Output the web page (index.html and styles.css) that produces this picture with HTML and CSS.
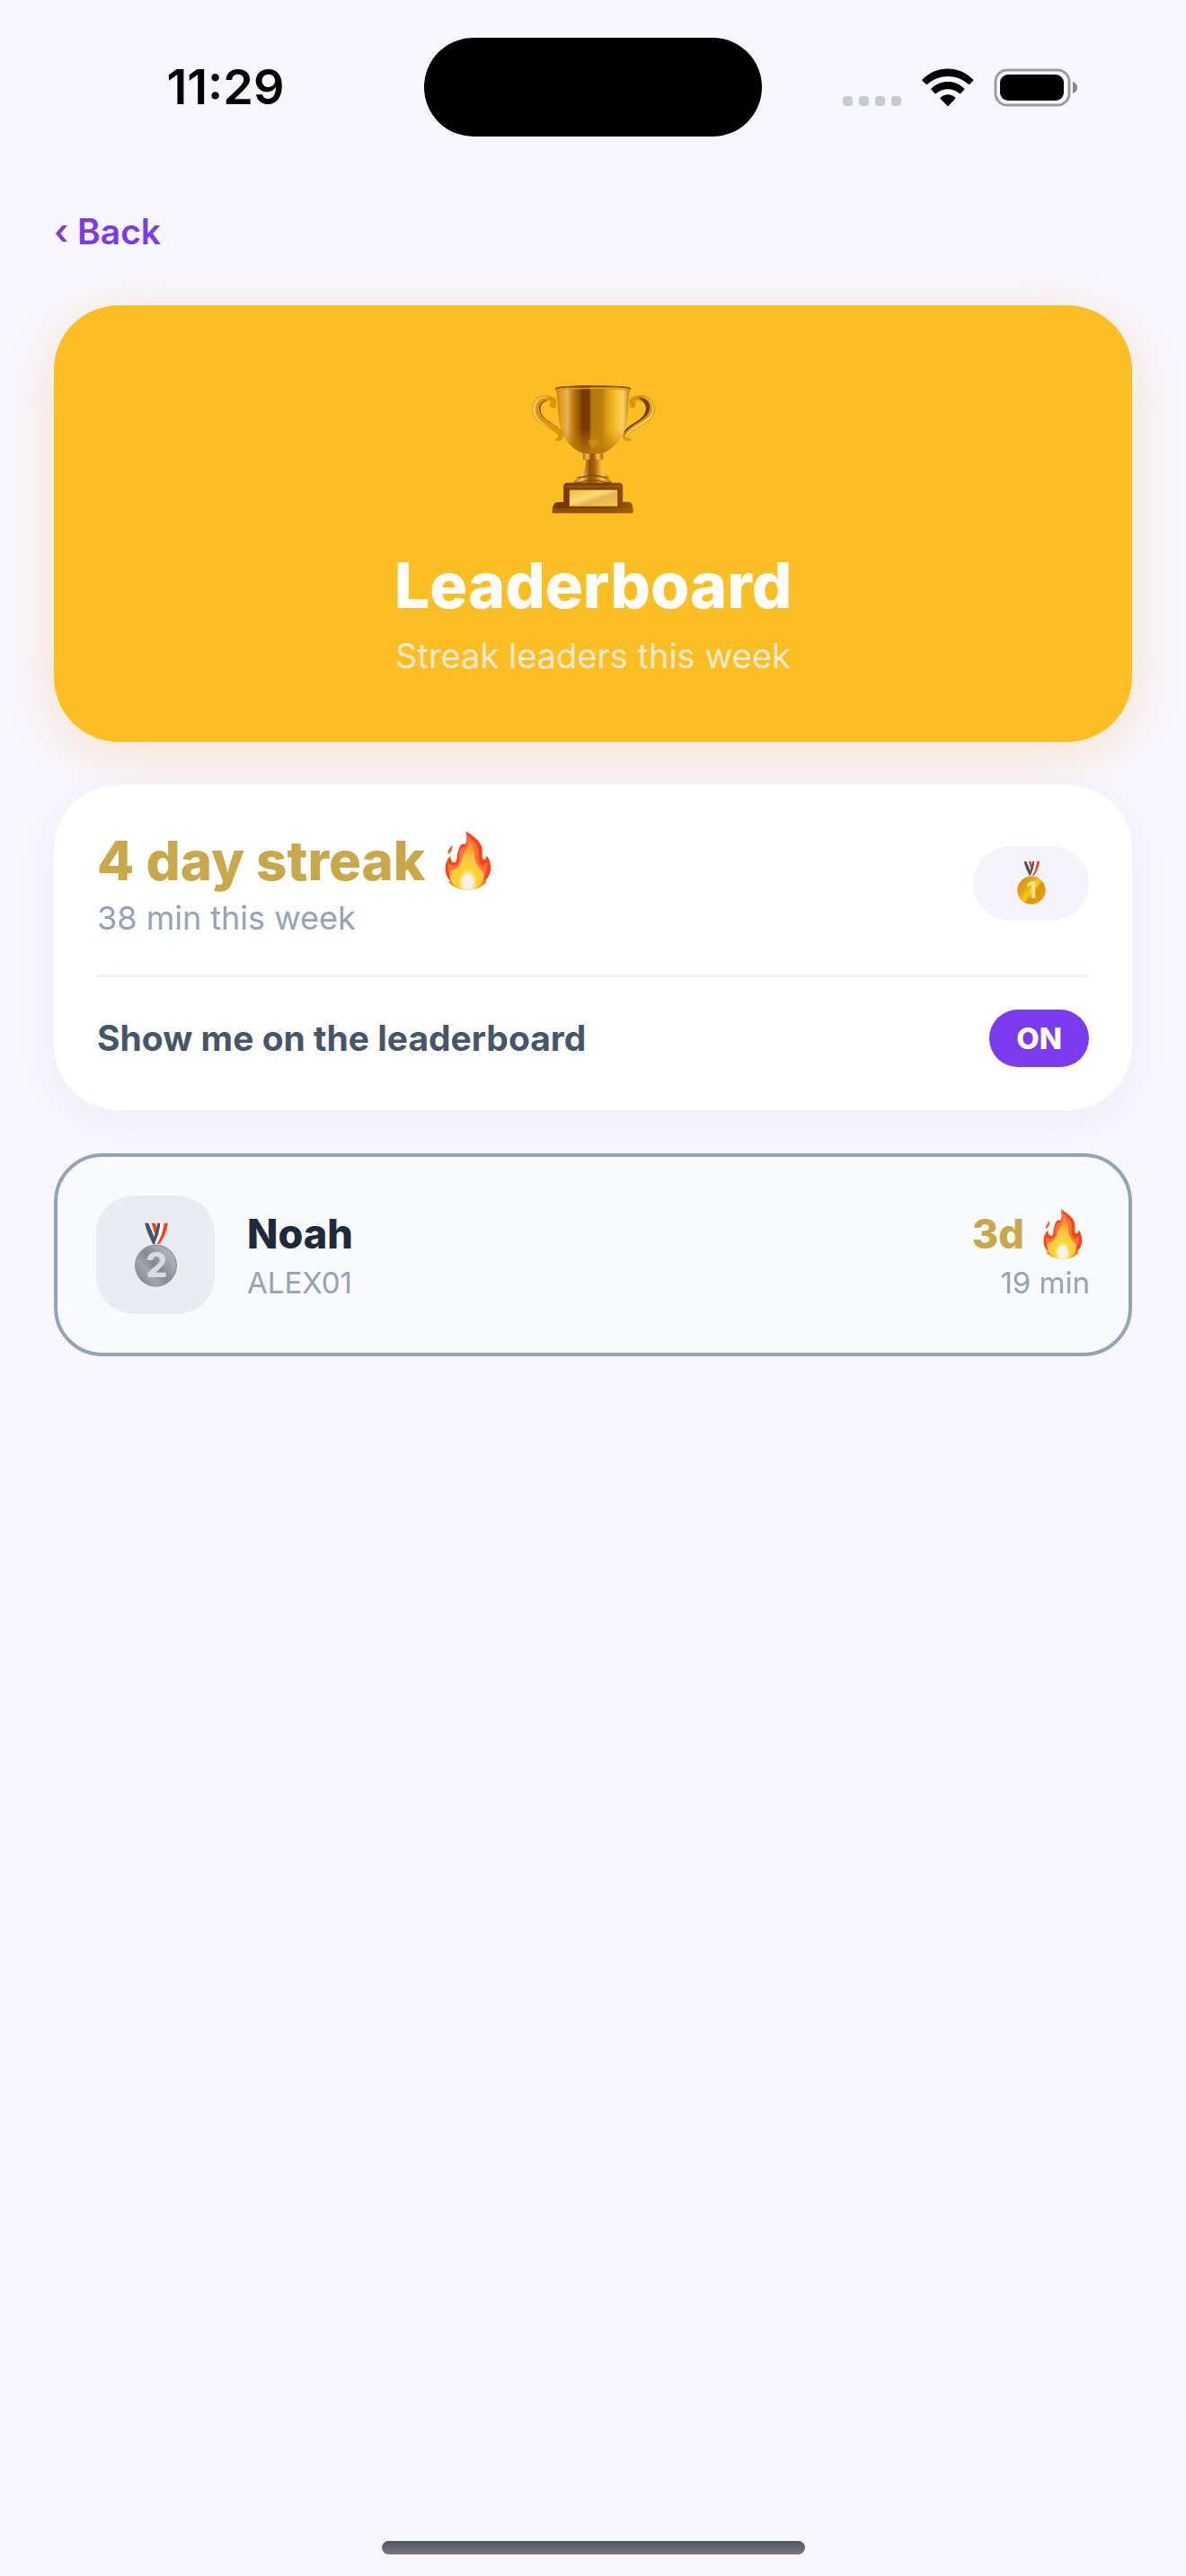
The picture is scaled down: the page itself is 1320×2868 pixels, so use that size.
FILE: index.html
```html
<!DOCTYPE html>
<html lang="en">
<head>
    <meta charset="UTF-8">
    <meta name="viewport" content="width=device-width, initial-scale=1.0">
    <title>Leaderboard</title>
    <link rel="stylesheet" href="styles.css">
</head>
<body>
    <!-- shared flame -->
    <svg class="defs" aria-hidden="true">
        <defs>
            <radialGradient id="fire_in" gradientUnits="userSpaceOnUse" cx="148" cy="222" r="120" gradientTransform="translate(148 222) scale(.62 1) translate(-148 -222)">
                <stop offset="0" stop-color="#f8f0e8"/>
                <stop offset=".22" stop-color="#fbeecb"/>
                <stop offset=".42" stop-color="#fbd52c"/>
                <stop offset=".7" stop-color="#fbc64a"/>
                <stop offset="1" stop-color="#f0a028"/>
            </radialGradient>
            <linearGradient id="fire_out" x1="0" y1="0" x2="0" y2="1">
                <stop offset="0" stop-color="#fb4416"/>
                <stop offset=".8" stop-color="#fb4416"/>
                <stop offset="1" stop-color="#fbbf24"/>
            </linearGradient>
            <symbol id="flame" viewBox="72 46 154 198">
                <path fill="url(#fire_out)" d="M142 47C158 60 186 74 194 98C199 114 194 130 198 140C205 146 211 138 210 128C221 140 226 158 224 178C222 194 214 204 206 212L210 218C194 236 174 243 150 243C124 243 96 236 82 214L92 217C78 202 72 186 73 168C74 152 80 138 91 129C89 141 94 152 104 152C114 150 110 130 115 116C120 100 124 90 130 90C136 88 139 96 142 86C147 72 142 60 142 47Z"/>
                <path fill="#fb713c" d="M143 54C150 66 176 82 182 102C188 120 178 146 192 160C204 166 208 154 212 148C216 176 204 200 196 208L100 208C86 194 78 176 84 154C90 164 108 166 116 154C122 142 114 126 122 110C128 98 136 104 142 94C148 82 146 66 143 54Z"/>
                <path fill="url(#fire_in)" d="M154 82C166 98 172 108 170 124C168 148 184 168 196 180C206 190 202 210 196 218C184 236 168 243 150 243C126 243 106 234 94 218C86 204 84 186 92 178C112 178 124 158 128 138C130 122 150 110 154 82Z"/>
                <path fill="#f8f2ec" d="M148 190C160 190 168 204 166 220C164 232 158 240 148 240C138 240 130 232 129 220C128 204 136 190 148 190Z"/>
                <path fill="#fb5a2c" d="M96 93C98 106 94 118 82 124C80 110 88 104 96 93Z"/>
            </symbol>
            <symbol id="ribbon" viewBox="0 0 140 72">
                <path fill="#fb4416" d="M55 0H68L80 40L66 44Z"/>
                <path fill="#f5f5f8" d="M45 0H55L70 48L64 62Z"/>
                <path fill="#475569" d="M33 0H45L66 50L68 70H60C50 48 38 26 33 0Z"/>
                <path fill="#475569" d="M75 0H85C82 26 76 48 64 70L58 58C68 40 72 22 75 0Z"/>
                <path fill="#fff" d="M85 0H97C94 28 88 48 74 70H66C78 48 84 24 85 0Z"/>
                <path fill="#fb4416" d="M97 0H110C106 32 94 54 82 70H74C88 46 94 26 97 0Z"/>
            </symbol>
        </defs>
    </svg>

    <div class="status">
        <time class="status_time">11:29</time>
        <div class="island"></div>
        <div class="status_icons">
            <svg width="66" height="43" viewBox="0 0 66 43" fill="#c5cad6">
                <rect x="0" y="31" width="11" height="11" rx="4"/>
                <rect x="18" y="31" width="11" height="11" rx="4"/>
                <rect x="36" y="31" width="11" height="11" rx="4"/>
                <rect x="54" y="31" width="11" height="11" rx="4"/>
            </svg>
            <svg width="58" height="43" viewBox="345 75 172 129">
                <path d="M345 113C392 64 469 64 516 113Q517 115 515 117L503 129Q501 130 499 128C462 93 400 93 363 128Q361 130 359 129L346 117Q344 115 345 113Z"/>
                <path d="M375 143C406 112 456 112 486 143Q487 145 485 147L473 160Q471 161 469 159C448 140 413 140 392 159Q390 161 388 160L376 147Q374 145 375 143Z"/>
                <path d="M406 173C420 159 442 159 456 173Q457 175 455 177L433 200Q431 202 429 200L406 177Q404 175 406 173Z"/>
            </svg>
            <svg width="94" height="43" viewBox="0 0 94 43">
                <rect x="2" y="2" width="82" height="39" rx="13" fill="none" stroke="#9b9ca3" stroke-width="3"/>
                <rect x="7" y="7" width="71" height="29" rx="9"/>
                <path fill="#85868c" d="M88 15Q93 17 93 21.500T88 28Z"/>
            </svg>
        </div>
    </div>

    <main class="page">
        <nav class="nav">
            <a href="#" class="back">‹ Back</a>
        </nav>

        <header class="hero">
            <svg class="trophy" viewBox="88 82 420 434" role="img" aria-label="Trophy">
                <defs>
                    <linearGradient id="cup" x1="0" x2="1" y1="0" y2="0">
                        <stop offset="0" stop-color="#c07a08"/>
                        <stop offset=".08" stop-color="#e0a020"/>
                        <stop offset=".16" stop-color="#e6b456"/>
                        <stop offset=".24" stop-color="#b97a0a"/>
                        <stop offset=".31" stop-color="#9a5a04"/>
                        <stop offset=".36" stop-color="#783803"/>
                        <stop offset=".45" stop-color="#783a04"/>
                        <stop offset=".48" stop-color="#b8780a"/>
                        <stop offset=".62" stop-color="#b8800c"/>
                        <stop offset=".68" stop-color="#dc9a10"/>
                        <stop offset=".8" stop-color="#fbc02a"/>
                        <stop offset=".9" stop-color="#fbd060"/>
                        <stop offset="1" stop-color="#b87808"/>
                    </linearGradient>
                    <linearGradient id="cup_low" x1="0" x2="0" y1="0" y2="1">
                        <stop offset=".6" stop-color="#c8880c" stop-opacity="0"/>
                        <stop offset="1" stop-color="#b87408"/>
                    </linearGradient>
                    <linearGradient id="stem" x1="0" x2="1" y1="0" y2="0">
                        <stop offset="0" stop-color="#a86404"/>
                        <stop offset=".22" stop-color="#f2c464"/>
                        <stop offset=".42" stop-color="#905004"/>
                        <stop offset=".55" stop-color="#a86404"/>
                        <stop offset=".75" stop-color="#fbc848"/>
                        <stop offset="1" stop-color="#a05c04"/>
                    </linearGradient>
                    <linearGradient id="wood" x1="0" x2="1" y1="0" y2="0">
                        <stop offset="0" stop-color="#783803"/>
                        <stop offset=".7" stop-color="#7c3c03"/>
                        <stop offset="1" stop-color="#9c5c04"/>
                    </linearGradient>
                    <linearGradient id="plate" x1="0" x2="1" y1="0" y2="1">
                        <stop offset="0" stop-color="#f0b838"/>
                        <stop offset=".4" stop-color="#fbdc74"/>
                        <stop offset=".6" stop-color="#e6b450"/>
                        <stop offset="1" stop-color="#fbcc4c"/>
                    </linearGradient>
                </defs>
                <!-- left handle, then right -->
                <path fill="#d8960f" d="M176 134C160 114 118 114 102 136C84 162 92 196 124 214C150 230 176 240 182 260Q176 268 168 264Q172 274 186 271Q202 266 198 248C190 226 166 216 148 204C124 188 116 166 126 148C134 136 150 134 158 138Q150 146 154 156Q164 166 174 158Z"/>
                <path fill="#f0c458" d="M102 140C88 162 94 194 124 212C150 226 176 238 184 256C176 242 156 228 136 214C106 194 98 166 112 142C120 130 138 124 154 128C136 116 114 122 102 140Z"/>
                <path fill="#8a4a04" d="M158 138C138 130 120 140 118 160C116 184 140 202 162 214C180 224 192 236 196 248C186 226 166 216 148 204C124 188 116 166 126 148C134 138 148 134 158 138Z"/>
                <path fill="#d8960f" d="M420 134C436 114 478 112 496 136C514 162 504 196 472 214C446 230 420 242 414 260Q420 268 430 264Q424 274 410 271Q394 266 398 248C406 226 430 216 448 204C472 188 482 166 472 148C464 136 448 134 438 138Q446 146 440 156Q430 166 422 158Z"/>
                <path fill="#783803" d="M450 126C482 128 494 148 486 172C478 196 450 208 430 222C416 232 404 242 400 250C406 226 430 216 448 204C472 188 482 166 472 148C466 138 458 132 450 126Z"/>
                <path fill="#fbd468" d="M470 124C500 132 508 160 498 184C484 212 448 222 426 240C414 250 412 258 408 266C404 250 420 236 438 224C464 206 490 196 496 172C500 150 490 132 470 124Z"/>
                <path fill="url(#cup)" d="M171 98C176 90 232 85 298 85S420 90 424 98L420 108C416 136 418 176 408 224C396 276 350 306 326 316L318 324H276L266 314C228 300 198 268 188 224C178 176 180 136 176 108Z"/>
                <path fill="url(#cup_low)" d="M171 98C176 90 232 85 298 85S420 90 424 98L420 108C416 136 418 176 408 224C396 276 350 306 326 316L318 324H276L266 314C228 300 198 268 188 224C178 176 180 136 176 108Z"/>
                <path fill="none" stroke="#8c4c04" stroke-width="5" d="M172 96C190 86 404 86 424 96"/>
                <path fill="none" stroke="#dc9c20" stroke-width="4" d="M175 103C210 92 386 92 420 103"/>
                <path fill="#e09c10" d="M280 270Q298 262 318 272Q310 292 298 294Q286 290 280 270Z" opacity=".5"/>
                <rect x="264" y="314" width="68" height="22" rx="8" fill="url(#stem)"/>
                <path fill="url(#stem)" d="M274 334H324C324 360 330 378 346 388C352 390 354 398 350 402C362 404 364 416 356 420H240C230 416 232 404 244 402C240 396 244 390 252 388C268 378 274 360 274 334Z"/>
                <path fill="none" stroke="#8c4c04" stroke-width="4" d="M250 396Q298 380 344 396M240 416Q298 392 356 416"/>
                <path fill="url(#wood)" d="M212 412H384Q398 412 398 426V476H418Q432 478 432 500V514H162V500Q164 480 178 477H199V426Q199 412 212 412Z"/>
                <path fill="#a06408" d="M162 498H432V514H162Z" opacity=".55"/>
                <path fill="#a06408" d="M206 420H390V430H206Z" opacity=".6"/>
                <rect x="219" y="436" width="161" height="55" fill="url(#plate)"/>
            </svg>
            <h1 class="hero_title">Leaderboard</h1>
            <p class="hero_text">Streak leaders this week</p>
        </header>

        <section class="card">
            <div class="card_top">
                <div class="streak">
                    <p class="streak_num">4 day streak
                        <svg class="flame_lg" role="img" aria-label="fire"><use href="#flame"/></svg>
                    </p>
                    <p class="streak_text">38 min this week</p>
                </div>
                <div class="badge">
                    <svg class="medal_sm" viewBox="0 0 140 212" role="img" aria-label="First place">
                        <defs>
                            <linearGradient id="gold" x1="0" x2="1" y1=".1" y2=".9">
                                <stop offset="0" stop-color="#cc8c10"/>
                                <stop offset=".35" stop-color="#e8a818"/>
                                <stop offset=".5" stop-color="#fbd010"/>
                                <stop offset=".62" stop-color="#d8940c"/>
                                <stop offset="1" stop-color="#e8a818"/>
                            </linearGradient>
                        </defs>
                        <use href="#ribbon" width="140" height="72"/>
                        <circle cx="70" cy="142" r="68" fill="url(#gold)" stroke="#e0a428" stroke-width="4"/>
                        <text class="medal_num" x="70" y="183" fill="#fbe08c">1</text>
                    </svg>
                </div>
            </div>
            <div class="card_row">
                <label for="show_me" class="show_label">Show me on the leaderboard</label>
                <button type="button" id="show_me" class="toggle" aria-pressed="true">ON</button>
            </div>
        </section>

        <section class="rank">
            <div class="avatar">
                <svg class="medal_lg" viewBox="0 0 140 212" role="img" aria-label="Second place">
                    <defs>
                        <linearGradient id="silver" x1="0" x2="1" y1=".9" y2=".1">
                            <stop offset="0" stop-color="#808186"/>
                            <stop offset=".3" stop-color="#a2a4aa"/>
                            <stop offset=".5" stop-color="#88898e"/>
                            <stop offset=".75" stop-color="#a4a8b2"/>
                            <stop offset="1" stop-color="#b4bac8"/>
                        </linearGradient>
                    </defs>
                    <use href="#ribbon" width="140" height="72"/>
                    <circle cx="70" cy="142" r="68" fill="url(#silver)" stroke="#94969c" stroke-width="4"/>
                    <text class="medal_num" x="72" y="181" fill="#d8dae4">2</text>
                </svg>
            </div>
            <div class="rank_user">
                <p class="rank_name">Noah</p>
                <p class="rank_sub">ALEX01</p>
            </div>
            <div class="rank_score">
                <p class="rank_days">3d
                    <svg class="flame_sm" role="img" aria-label="fire"><use href="#flame"/></svg>
                </p>
                <p class="rank_sub">19 min</p>
            </div>
        </section>
    </main>

    <div class="home_bar"></div>
</body>
</html>
```

FILE: styles.css
```css
*{
    box-sizing: border-box;
}
body{
    margin: 0;
    min-height: 100vh;
    display: flex;
    flex-direction: column;
    background-color: #f8f7ff;
    font-family: Inter, "Liberation Sans", sans-serif;
    color: #1e293b;
}
h1,p{
    margin: 0;
}
.defs{
    position: absolute;
    width: 0;
    height: 0;
}

/* status bar */
.status{
    display: grid;
    grid-template-columns: 1fr 376px 1fr;
    align-items: center;
    padding: 42px 30px 0;
}
.status_time{
    text-align: center;
    font-size: 54px;
    font-weight: 600;
    line-height: 64px;
    color: #000;
}
.island{
    height: 110px;
    border-radius: 56px;
    background-color: #000;
}
.status_icons{
    display: flex;
    justify-content: center;
    gap: 22px;
}

.page{
    display: flex;
    flex-direction: column;
    gap: 48px;
    padding: 0 60px;
}
.nav{
    padding: 82px 0 10px;
}
.back{
    display: inline-block;
    font-size: 39px;
    font-weight: 600;
    line-height: 48px;
    color: #7c3aed;
    text-decoration: none;
}

/* yellow header */
.hero{
    display: flex;
    flex-direction: column;
    align-items: center;
    padding: 88px 48px 72px;
    border-radius: 72px;
    background-color: #fbbf24;
    box-shadow: 0 12px 60px rgba(251, 165, 40, .25);
}
.trophy{
    width: 140px;
    height: 144px;
    margin-bottom: 38px;
}
.hero_title{
    font-size: 70px;
    font-weight: 800;
    line-height: 84px;
    color: #fff;
}
.hero_text{
    margin-top: 12px;
    font-size: 38px;
    line-height: 48px;
    color: #fbe9cf;
}

/* own streak */
.card{
    padding: 48px;
    border-radius: 72px;
    background-color: #fff;
    box-shadow: 0 12px 48px rgba(76, 60, 160, .06);
}
.card_top,.card_row{
    display: flex;
    align-items: center;
    justify-content: space-between;
}
.card_top{
    padding-bottom: 41px;
}
.card_row{
    padding-top: 36px;
    border-top: 3px solid #f3f1fb;
}
.streak_num{
    display: flex;
    align-items: center;
    gap: 22px;
    font-size: 60px;
    font-weight: 800;
    line-height: 72px;
    color: #c9a84c;
}
.flame_lg{
    width: 52px;
    height: 66px;
}
.streak_text{
    margin-top: 6px;
    font-size: 36px;
    line-height: 44px;
    color: #94a3b8;
}
.badge{
    display: flex;
    align-items: center;
    justify-content: center;
    width: 129px;
    height: 83px;
    border-radius: 42px;
    background-color: #f5f3ff;
}
.medal_sm{
    width: 32px;
    height: 48px;
}
.medal_lg{
    width: 47px;
    height: 72px;
}
.medal_num{
    font-size: 112px;
    font-weight: 800;
    text-anchor: middle;
}
.show_label{
    font-size: 39px;
    font-weight: 700;
    line-height: 48px;
    color: #475569;
}
.toggle{
    padding: 12px 30px;
    border: 0;
    border-radius: 32px;
    background-color: #7c3aed;
    font-family: inherit;
    font-size: 33px;
    font-weight: 800;
    line-height: 40px;
    color: #fff;
}

/* ranking row */
.rank{
    display: flex;
    align-items: center;
    gap: 36px;
    padding: 43px;
    border: 4px solid #94a3b8;
    border-radius: 54px;
    background-color: #f9fafc;
}
.avatar{
    display: flex;
    align-items: center;
    justify-content: center;
    width: 132px;
    height: 132px;
    border-radius: 42px;
    background-color: #e9ecf1;
}
.rank_score{
    margin-left: auto;
    text-align: right;
}
.rank_name,.rank_days{
    font-size: 45px;
    font-weight: 800;
    line-height: 56px;
}
.rank_days{
    display: flex;
    align-items: center;
    justify-content: flex-end;
    gap: 21px;
    padding-right: 8px;
    color: #c9a84c;
}
.flame_sm{
    width: 44px;
    height: 56px;
}
.rank_sub{
    margin-top: 6px;
    font-size: 33px;
    line-height: 40px;
    color: #94a3b8;
}

.home_bar{
    width: 471px;
    height: 15px;
    margin: auto auto 24px;
    border-radius: 8px;
    background-image: linear-gradient(#475569, #67686e 50%, #78797e);
}
```
